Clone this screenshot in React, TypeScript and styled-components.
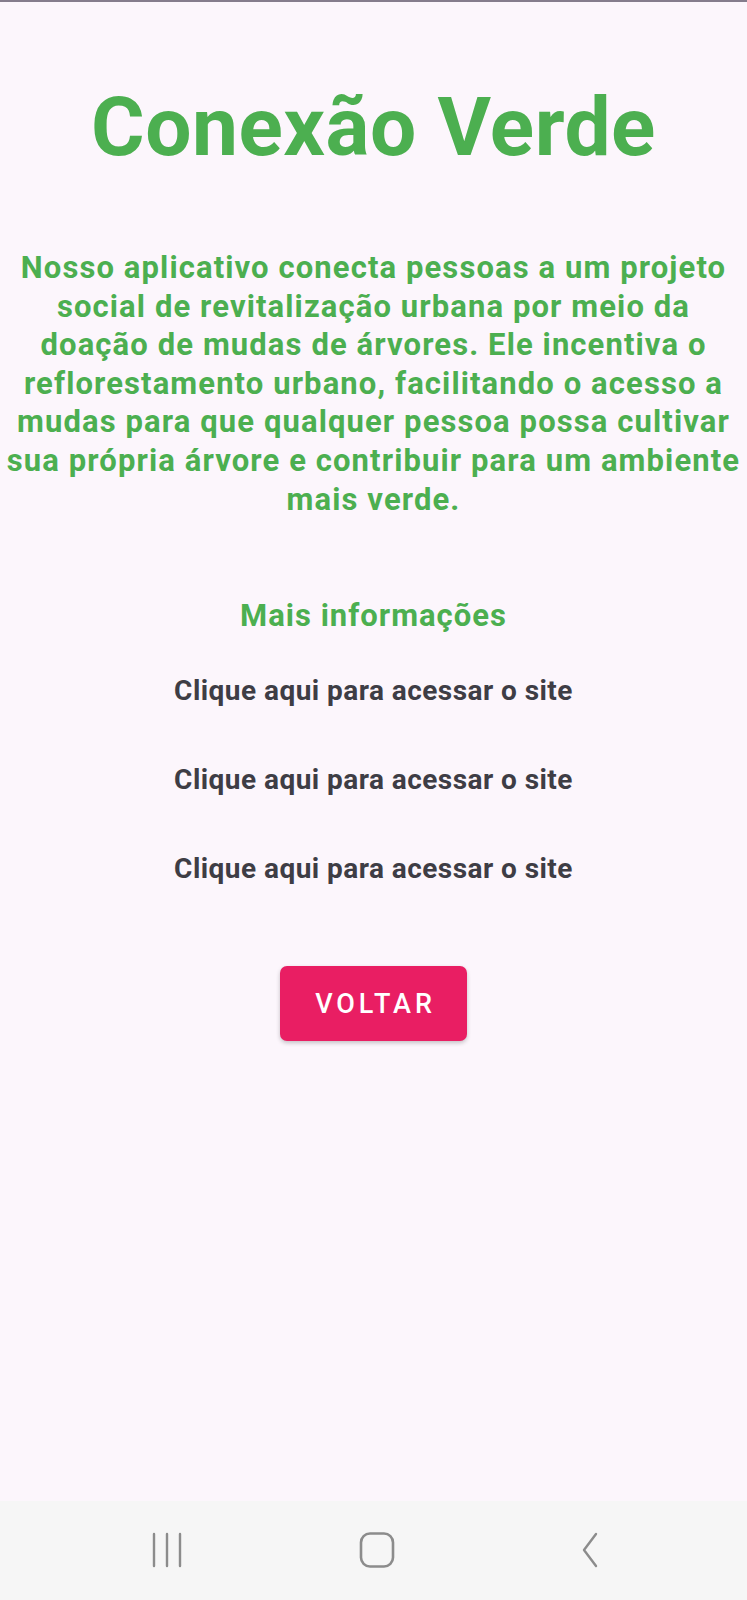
import React from "react";
import styled, { createGlobalStyle } from "styled-components";

const Global = createGlobalStyle`
  html, body { margin: 0; padding: 0; background: #fcf6fc; }
  * { box-sizing: border-box; }
  #root { min-height: 100vh; }
`;

const Screen = styled.div`
  min-height: 100vh;
  display: flex;
  flex-direction: column;
  background: #fcf6fc;
  border-top: 2px solid #857c8c;
  font-family: Roboto, "Noto Sans", Arial, sans-serif;
`;

const Content = styled.main`
  flex: 1;
  display: flex;
  flex-direction: column;
  align-items: center;
  padding: 77px 3px 0;
`;

const Title = styled.h1`
  margin: 0;
  font-size: 82px;
  line-height: 96px;
  font-weight: 700;
  letter-spacing: 0.5px;
  color: #4caf50;
  text-align: center;
`;

const Description = styled.p`
  margin: 74px 0 0;
  font-size: 31px;
  line-height: 38.6px;
  font-weight: 700;
  letter-spacing: 1.1px;
  color: #4caf50;
  text-align: center;
`;

const SectionTitle = styled.h2`
  margin: 77px 0 0;
  font-size: 31px;
  line-height: 40px;
  font-weight: 700;
  letter-spacing: 1px;
  color: #4caf50;
  text-align: center;
`;

const LinkList = styled.div`
  margin-top: 37px;
  display: flex;
  flex-direction: column;
  align-items: center;
  gap: 53px;
`;

const SiteLink = styled.a`
  font-size: 28px;
  line-height: 36px;
  font-weight: 700;
  letter-spacing: 0.45px;
  color: #3e3d45;
  text-decoration: none;
`;

const BackButton = styled.button`
  margin-top: 79px;
  width: 187px;
  height: 75px;
  border: none;
  border-radius: 7px;
  background: #e91e63;
  color: #ffffff;
  font-family: Roboto, "Noto Sans", Arial, sans-serif;
  font-size: 27px;
  font-weight: 500;
  letter-spacing: 3.9px;
  padding: 0 0 0 4px;
  box-shadow: 0 2px 4px rgba(0, 0, 0, 0.22);
  cursor: pointer;
`;

const NavBar = styled.nav`
  height: 99px;
  background: #f6f6f6;
  display: flex;
  align-items: center;
  justify-content: center;
  gap: 170px;
  padding: 0 0 2px 6px;
`;

const NavIcon = styled.svg`
  width: 40px;
  height: 36px;
  display: block;
`;

export default function App() {
  return (
    <>
      <Global />
      <Screen>
        <Content>
          <Title>Conexão Verde</Title>
          <Description>
            Nosso aplicativo conecta pessoas a um projeto social de revitalização urbana por meio da doação de mudas de
            árvores. Ele incentiva o reflorestamento urbano, facilitando o acesso a mudas para que qualquer pessoa possa
            cultivar sua própria árvore e contribuir para um ambiente mais verde.
          </Description>
          <SectionTitle>Mais informações</SectionTitle>
          <LinkList>
            <SiteLink href="#">Clique aqui para acessar o site</SiteLink>
            <SiteLink href="#">Clique aqui para acessar o site</SiteLink>
            <SiteLink href="#">Clique aqui para acessar o site</SiteLink>
          </LinkList>
          <BackButton>VOLTAR</BackButton>
        </Content>
        <NavBar>
          <NavIcon viewBox="0 0 40 36">
            <g stroke="#8c8c8c" strokeWidth="2.4" strokeLinecap="round">
              <line x1="7" y1="2" x2="7" y2="34" />
              <line x1="20" y1="2" x2="20" y2="34" />
              <line x1="33" y1="2" x2="33" y2="34" />
            </g>
          </NavIcon>
          <NavIcon viewBox="0 0 40 36">
            <rect x="4" y="1.5" width="32" height="33" rx="9" fill="none" stroke="#8c8c8c" strokeWidth="2.6" />
          </NavIcon>
          <NavIcon viewBox="0 0 40 36">
            <polyline
              points="29,2 17,18 29,34"
              fill="none"
              stroke="#8c8c8c"
              strokeWidth="2.4"
              strokeLinecap="round"
              strokeLinejoin="round"
            />
          </NavIcon>
        </NavBar>
      </Screen>
    </>
  );
}
